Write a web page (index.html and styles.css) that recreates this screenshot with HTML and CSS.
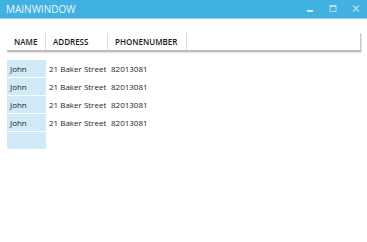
FILE: index.html
```html
<!DOCTYPE html>
<html>
<head>
<meta charset="utf-8">
<link rel="stylesheet" href="styles.css">
</head>
<body>
<div class="window">
  <div class="titlebar">
    <span class="title">MAINWINDOW</span>
    <div class="controls">
      <svg class="ctl" width="10" height="10" viewBox="0 0 10 10"><rect x="2" y="6" width="6" height="2" fill="#d6eefa"/></svg>
      <svg class="ctl" width="10" height="10" viewBox="0 0 10 10"><rect x="2" y="1.5" width="6" height="6" fill="none" stroke="#b4def3" stroke-width="1"/><rect x="2" y="1.5" width="6" height="1.5" fill="#b4def3"/></svg>
      <svg class="ctl" width="10" height="10" viewBox="0 0 10 10"><path d="M2 1.5 L8 7.5 M8 1.5 L2 7.5" stroke="#b4def3" stroke-width="1.2"/></svg>
    </div>
  </div>
  <div class="content">
    <div class="grid">
      <div class="header">
        <div class="hcell c-name">NAME</div>
        <div class="hcell c-addr">ADDRESS</div>
        <div class="hcell c-phone">PHONENUMBER</div>
        <div class="hcell c-fill"></div>
      </div>
      <div class="rows">
        <div class="row"><div class="cell c-name">John</div><div class="cell c-addr">21 Baker Street</div><div class="cell c-phone">82013081</div></div>
        <div class="row"><div class="cell c-name">John</div><div class="cell c-addr">21 Baker Street</div><div class="cell c-phone">82013081</div></div>
        <div class="row"><div class="cell c-name">John</div><div class="cell c-addr">21 Baker Street</div><div class="cell c-phone">82013081</div></div>
        <div class="row"><div class="cell c-name">John</div><div class="cell c-addr">21 Baker Street</div><div class="cell c-phone">82013081</div></div>
        <div class="row"><div class="cell c-name"></div></div>
      </div>
    </div>
  </div>
</div>
</body>
</html>
```
FILE: styles.css
```css
html, body {
  margin: 0;
  padding: 0;
  background: #ffffff;
}
body {
  font-family: "Open Sans", "Noto Sans", sans-serif;
  color: #1e1e1e;
}
.window {
  width: 367px;
  height: 242px;
  background: #ffffff;
}
.titlebar {
  height: 18px;
  background: #41b1e1;
  border-bottom: 1px solid #8fd0ee;
  display: flex;
  align-items: center;
  justify-content: space-between;
  padding-left: 6px;
  box-sizing: content-box;
}
.title {
  color: #e9f6fc;
  font-size: 10px;
  line-height: 18px;
}
.controls {
  display: flex;
  gap: 13px;
  padding-right: 6px;
  align-items: center;
  height: 18px;
}
.ctl { display: block; }
.content {
  padding: 14px 6px 0 7px;
}
.grid {
  width: 354px;
}
.header {
  display: flex;
  height: 17px;
  border-bottom: 2px solid #bdbdbd;
  border-right: 1px solid #c9c9c9;
  box-shadow: 1px 1px 0 #e4e4e4;
  margin-bottom: 8px;
}
.hcell {
  font-size: 8px;
  font-weight: 600;
  line-height: 17px;
  padding-left: 7px;
  border-right: 1px solid #dcdcdc;
  box-sizing: border-box;
  color: #1a1a1a;
}
.hcell.c-fill { flex: 1; border-right: none; }
.c-name { width: 39px; }
.c-addr { width: 62px; }
.c-phone { width: 79px; }
.row {
  display: flex;
  height: 18px;
}
.cell {
  font-size: 8px;
  line-height: 17px;
  box-sizing: border-box;
  color: #1e1e1e;
  white-space: nowrap;
}
.cell.c-name {
  background: #d0eaf8;
  border-bottom: 1px solid #ffffff;
  padding-left: 3px;
}
.cell.c-addr { padding-left: 3px; }
.cell.c-phone { padding-left: 3px; }
```
